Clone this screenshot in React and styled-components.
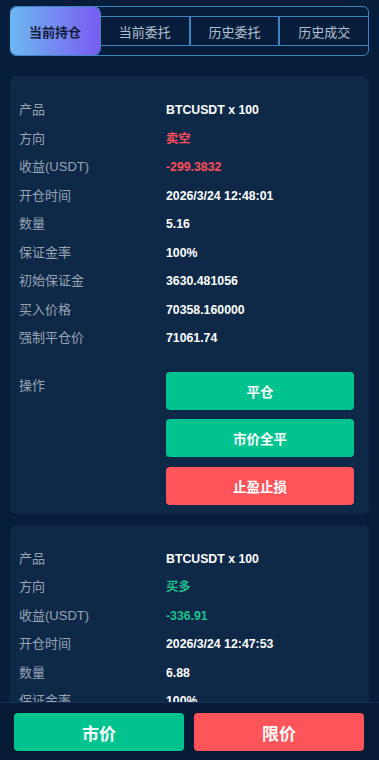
import React from 'react';
import styled, { createGlobalStyle } from 'styled-components';

const GlobalStyle = createGlobalStyle`
    html, body {
        margin: 0;
        padding: 0;
        background-color: #061d3b;
        overflow: hidden;
    }
    * {
        box-sizing: border-box;
    }
`;

// Styling
const Page = styled.div`
    min-height: 100vh;
    padding: 6px 10px 80px 10px;
    font-family: "Liberation Sans", "Noto Sans CJK SC", sans-serif;
    background-color: #061d3b;
`;

const Tabs = styled.div`
    display: flex;
    align-items: center;
    height: 50px;
    border: 1px solid #3f84c0;
    border-radius: 6px;
`;

const Tab = styled.div`
    flex: ${p => (p.$active ? '0 0 91px' : '1')};
    display: flex;
    align-items: center;
    justify-content: center;
    font-size: 13px;
    color: ${p => (p.$active ? '#141c3c' : '#b4c0d0')};
    font-weight: ${p => (p.$active ? 'bold' : 'normal')};
    height: ${p => (p.$active ? '50px' : '30px')};
    margin: ${p => (p.$active ? '-1px 0 -1px -1px' : '0')};
    border-radius: ${p => (p.$active ? '8px' : '0')};
    background: ${p => (p.$active ? 'linear-gradient(90deg, #6cb8f0, #7a5cf2)' : 'transparent')};
    border: 1px solid #3f84c0;
    border-left: ${p => (p.$first ? 'none' : '1px solid #3f84c0')};
    margin-right: ${p => (p.$last ? '-1px' : '0')};
`;

const CardList = styled.div`
    display: flex;
    flex-direction: column;
    gap: 11px;
    margin-top: 20px;
`;

const Card = styled.div`
    background-color: #0e2948;
    border-radius: 6px;
    padding: 20px 15px 9px 9px;
`;

const Row = styled.div`
    display: flex;
    align-items: flex-start;
    height: ${p => (p.$tall ? 'auto' : '28.5px')};
    margin-top: ${p => (p.$tall ? '19px' : '0')};
`;

const Label = styled.div`
    width: 147px;
    flex-shrink: 0;
    font-size: 13px;
    line-height: 28.5px;
    color: #98a4b4;
`;

const Value = styled.div`
    font-size: 12.3px;
    line-height: 28.5px;
    font-weight: bold;
    color: ${p => p.$color || '#ffffff'};
`;

const Actions = styled.div`
    flex: 1;
    display: flex;
    flex-direction: column;
    gap: 9.5px;
`;

const ActionButton = styled.button`
    height: 38px;
    border: none;
    border-radius: 4px;
    font-family: inherit;
    font-size: 13.5px;
    font-weight: bold;
    color: #ffffff;
    background-color: ${p => (p.$red ? '#ff5459' : '#00c38f')};
`;

const BottomBar = styled.div`
    position: fixed;
    left: 0;
    right: 0;
    bottom: 0;
    height: 58px;
    display: flex;
    gap: 10px;
    padding: 10px 15px 10px 14px;
    background-color: #061a35;
    border-top: 1px solid #14325a;
`;

const BarButton = styled.button`
    flex: 1;
    height: 38px;
    border: none;
    border-radius: 4px;
    font-family: "Liberation Sans", "Noto Sans CJK SC", sans-serif;
    font-size: 17px;
    font-weight: bold;
    color: #ffffff;
    background-color: ${p => (p.$red ? '#ff5459' : '#00c38f')};
`;

const GREEN = '#1fc08e';
const RED = '#ff4d5a';

const positions = [
    {
        product: 'BTCUSDT x 100',
        side: '卖空',
        sideColor: RED,
        profit: '-299.3832',
        profitColor: RED,
        time: '2026/3/24 12:48:01',
        qty: '5.16',
        rate: '100%',
        margin: '3630.481056',
        price: '70358.160000',
        liq: '71061.74',
    },
    {
        product: 'BTCUSDT x 100',
        side: '买多',
        sideColor: GREEN,
        profit: '-336.91',
        profitColor: GREEN,
        time: '2026/3/24 12:47:53',
        qty: '6.88',
        rate: '100%',
        margin: '3630.481056',
        price: '70358.160000',
        liq: '71061.74',
    },
];

function PositionCard({ pos }) {
    return (
        <Card>
            <Row><Label>产品</Label><Value>{pos.product}</Value></Row>
            <Row><Label>方向</Label><Value $color={pos.sideColor}>{pos.side}</Value></Row>
            <Row><Label>收益(USDT)</Label><Value $color={pos.profitColor}>{pos.profit}</Value></Row>
            <Row><Label>开仓时间</Label><Value>{pos.time}</Value></Row>
            <Row><Label>数量</Label><Value>{pos.qty}</Value></Row>
            <Row><Label>保证金率</Label><Value>{pos.rate}</Value></Row>
            <Row><Label>初始保证金</Label><Value>{pos.margin}</Value></Row>
            <Row><Label>买入价格</Label><Value>{pos.price}</Value></Row>
            <Row><Label>强制平仓价</Label><Value>{pos.liq}</Value></Row>
            <Row $tall>
                <Label>操作</Label>
                <Actions>
                    <ActionButton>平仓</ActionButton>
                    <ActionButton>市价全平</ActionButton>
                    <ActionButton $red>止盈止损</ActionButton>
                </Actions>
            </Row>
        </Card>
    );
}

export default function App() {
    return (
        <>
            <GlobalStyle />
            <Page>
                <Tabs>
                    <Tab $active $first>当前持仓</Tab>
                    <Tab $first>当前委托</Tab>
                    <Tab>历史委托</Tab>
                    <Tab $last>历史成交</Tab>
                </Tabs>

                <CardList>
                    {positions.map((pos, i) => (
                        <PositionCard key={i} pos={pos} />
                    ))}
                </CardList>
            </Page>

            <BottomBar>
                <BarButton>市价</BarButton>
                <BarButton $red>限价</BarButton>
            </BottomBar>
        </>
    );
}
